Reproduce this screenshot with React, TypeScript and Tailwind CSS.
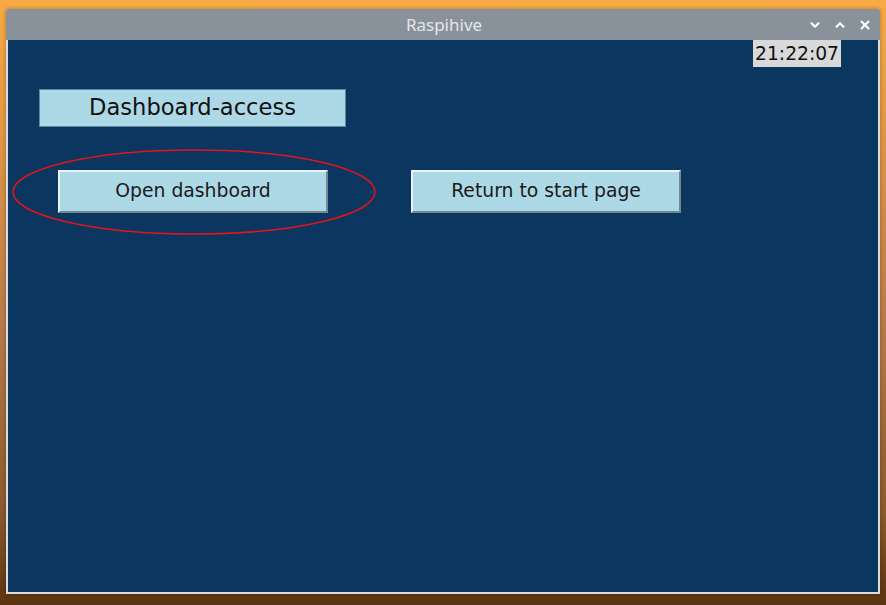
import { ChevronDown, ChevronUp, X } from "lucide-react";

const dejavu = { fontFamily: '"DejaVu Sans", sans-serif' };

const TkButton = ({ label }: { label: string }) => {
  return (
    <button
      className="flex h-[43px] w-[270px] items-center justify-center border-2 border-t-[#e8f4f8] border-l-[#e8f4f8] border-r-[#6f8a96] border-b-[#6f8a96] bg-[#add8e6] text-[18.8px] text-[#1a1a1a]"
      style={dejavu}
    >
      {label}
    </button>
  );
};

export default function App() {
  return (
    <div className="h-[605px] w-[886px] overflow-hidden bg-[linear-gradient(180deg,#f8aa44_0%,#e39a45_20%,#b77a4a_55%,#8a5a2c_85%,#5a3411_100%)] pt-[9px] pl-[6px]">
      <div className="flex h-[585px] w-[874px] flex-col rounded-t-[3px] shadow-[0_0_4px_rgba(0,0,0,0.3)]">
        {/* title bar */}
        <div className="relative flex h-[31px] items-center justify-center rounded-t-[3px] bg-[#89929b]">
          <span
            className="pl-[2px] text-[17px] text-[#e4e7ea]"
            style={{ fontFamily: '"Noto Sans", "DejaVu Sans", sans-serif' }}
          >
            Raspihive
          </span>
          <div className="absolute top-0 right-[8px] flex h-full items-center gap-[11px] text-white">
            <ChevronDown size={14} strokeWidth={3.5} />
            <ChevronUp size={14} strokeWidth={3.5} />
            <X size={14} strokeWidth={3.5} />
          </div>
        </div>
        {/* content */}
        <div className="relative flex-1 border-x-2 border-b-2 border-[#dcdcdc] bg-[#0b3660]">
          <div className="flex justify-end pr-[37px]">
            <span
              className="bg-[#d9d9d9] px-[2px] text-[18.7px] leading-[27px] text-[#111]"
              style={dejavu}
            >
              21:22:07
            </span>
          </div>
          <div className="pl-[31px] pt-[22px]">
            <div
              className="flex h-[38px] w-[307px] items-center justify-center border border-[#5f88a3] bg-[#add8e6] text-[22.6px] text-[#111]"
              style={dejavu}
            >
              Dashboard-access
            </div>
          </div>
          <div className="flex gap-[83px] pl-[50px] pt-[43px]">
            <div className="relative">
              <TkButton label="Open dashboard" />
              <svg
                className="pointer-events-none absolute top-[-22px] left-[-47px]"
                width="366"
                height="88"
                viewBox="0 0 366 88"
              >
                <ellipse cx="183" cy="44" rx="181" ry="42" fill="none" stroke="#e0141c" strokeWidth="1.6" />
              </svg>
            </div>
            <TkButton label="Return to start page" />
          </div>
        </div>
      </div>
    </div>
  );
}
